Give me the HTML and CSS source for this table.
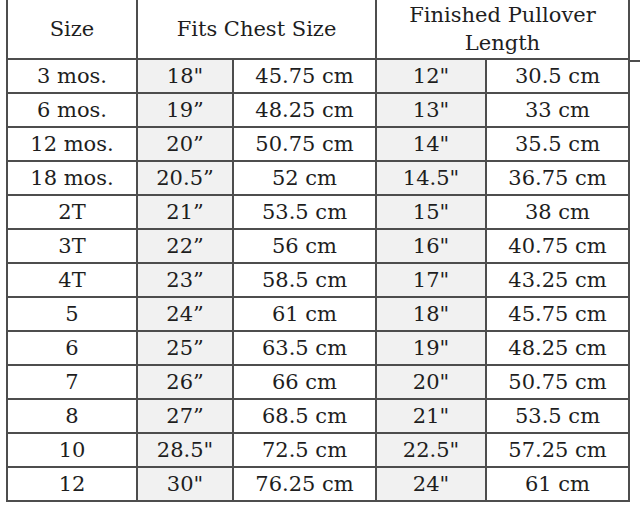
FILE: index.html
```html
<!DOCTYPE html>
<html>
<head>
<meta charset="utf-8">
<link rel="stylesheet" href="styles.css">
</head>
<body>
<div class="wrap">
<table class="sizes">
  <colgroup>
    <col class="c-size"><col class="c-in"><col class="c-cm"><col class="c-in2"><col class="c-cm2">
  </colgroup>
  <thead>
    <tr class="head">
      <th>Size</th>
      <th colspan="2">Fits Chest Size</th>
      <th colspan="2">Finished Pullover<br>Length</th>
    </tr>
  </thead>
  <tbody>
    <tr><td>3 mos.</td><td class="sh">18"</td><td>45.75 cm</td><td class="sh">12"</td><td>30.5 cm</td></tr>
    <tr><td>6 mos.</td><td class="sh">19”</td><td>48.25 cm</td><td class="sh">13"</td><td>33 cm</td></tr>
    <tr><td>12 mos.</td><td class="sh">20”</td><td>50.75 cm</td><td class="sh">14"</td><td>35.5 cm</td></tr>
    <tr><td>18 mos.</td><td class="sh">20.5”</td><td>52 cm</td><td class="sh">14.5"</td><td>36.75 cm</td></tr>
    <tr><td>2T</td><td class="sh">21”</td><td>53.5 cm</td><td class="sh">15"</td><td>38 cm</td></tr>
    <tr><td>3T</td><td class="sh">22”</td><td>56 cm</td><td class="sh">16"</td><td>40.75 cm</td></tr>
    <tr><td>4T</td><td class="sh">23”</td><td>58.5 cm</td><td class="sh">17"</td><td>43.25 cm</td></tr>
    <tr><td>5</td><td class="sh">24”</td><td>61 cm</td><td class="sh">18"</td><td>45.75 cm</td></tr>
    <tr><td>6</td><td class="sh">25”</td><td>63.5 cm</td><td class="sh">19"</td><td>48.25 cm</td></tr>
    <tr><td>7</td><td class="sh">26”</td><td>66 cm</td><td class="sh">20"</td><td>50.75 cm</td></tr>
    <tr><td>8</td><td class="sh">27”</td><td>68.5 cm</td><td class="sh">21"</td><td>53.5 cm</td></tr>
    <tr><td>10</td><td class="sh">28.5"</td><td>72.5 cm</td><td class="sh">22.5"</td><td>57.25 cm</td></tr>
    <tr><td>12</td><td class="sh">30"</td><td>76.25 cm</td><td class="sh">24"</td><td>61 cm</td></tr>
  </tbody>
</table>
<div class="sliver"></div>
</div>
</body>
</html>
```
FILE: styles.css
```css
html, body {
  margin: 0;
  padding: 0;
  background: #fff;
}
.wrap {
  display: flex;
  align-items: flex-start;
  padding-left: 6px;
  margin-top: -2px;
}
.sizes {
  border-collapse: collapse;
  table-layout: fixed;
  width: 624px;
  font-family: "DejaVu Serif", "Liberation Serif", serif;
  font-size: 21px;
  color: #1e1e1e;
}
.c-size { width: 130px; }
.c-in { width: 96px; }
.c-cm { width: 143px; }
.c-in2 { width: 110px; }
.c-cm2 { width: 143px; }
.sizes th, .sizes td {
  border: 2px solid #4d4d4d;
  text-align: center;
  padding: 0;
  font-weight: normal;
}
.sizes th {
  height: 60px;
  line-height: 28px;
  box-sizing: border-box;
}
.sizes td {
  height: 34px;
  box-sizing: border-box;
  line-height: 30px;
}
.sizes td.sh {
  background: #f1f1f1;
}
.sliver {
  width: 11px;
  height: 64px;
  border-bottom: 2px solid #4d4d4d;
  box-sizing: border-box;
}
```
